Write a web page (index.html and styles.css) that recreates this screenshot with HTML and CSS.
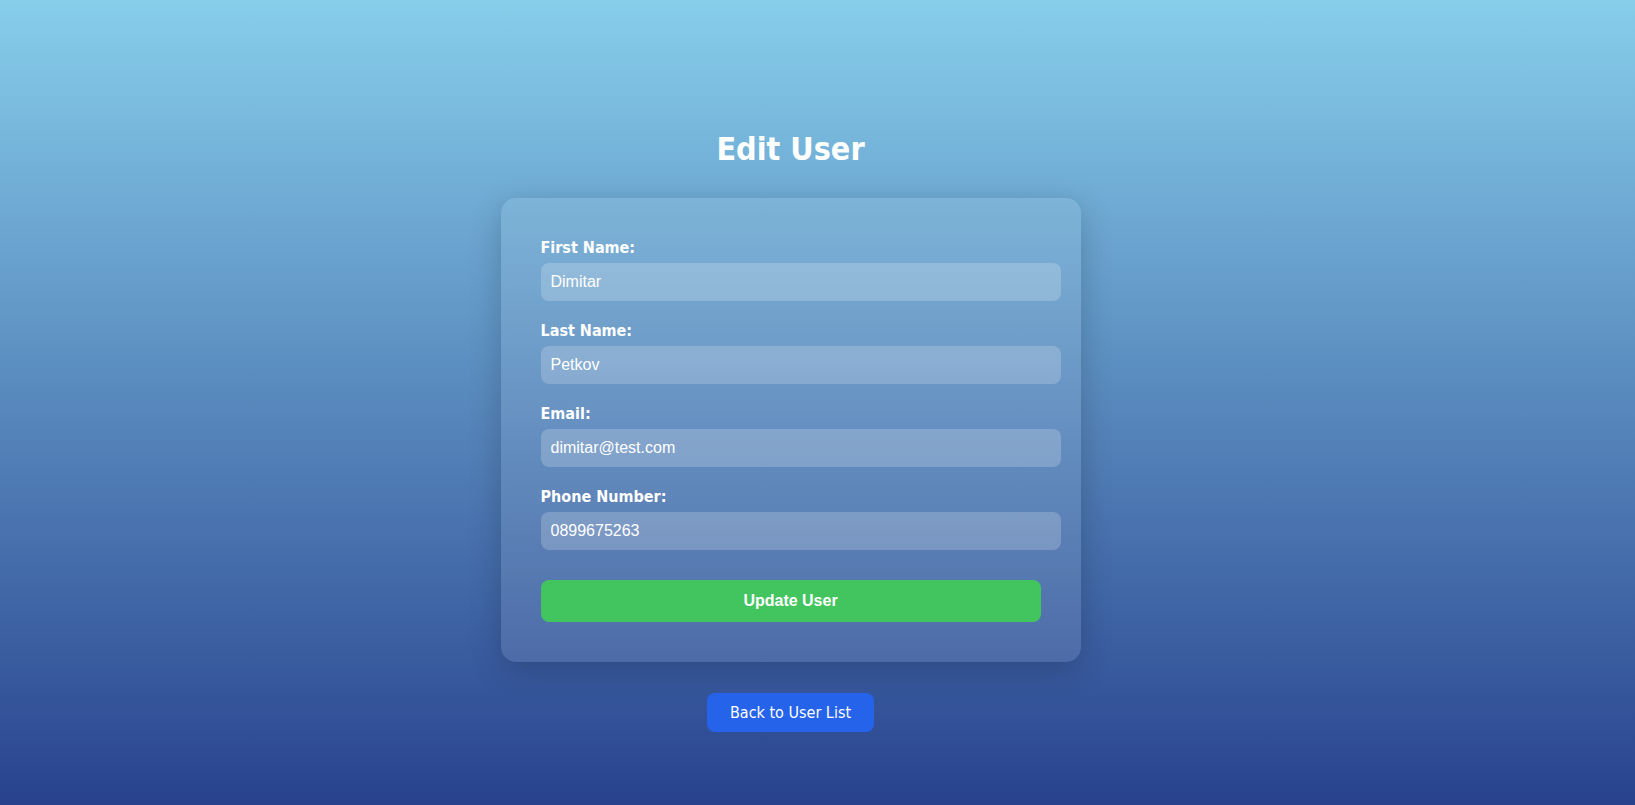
FILE: index.html
```html
<!DOCTYPE html>
<html lang="en">
<head>
<meta charset="UTF-8">
<title>Edit User</title>
<link rel="stylesheet" href="styles.css">
</head>
<body>
<main class="page">
  <h1 class="title">Edit User</h1>
  <form class="card">
    <label class="label" for="firstName">First Name:</label>
    <input class="input" id="firstName" type="text" value="Dimitar">
    <label class="label" for="lastName">Last Name:</label>
    <input class="input" id="lastName" type="text" value="Petkov">
    <label class="label" for="email">Email:</label>
    <input class="input" id="email" type="email" value="dimitar@test.com">
    <label class="label" for="phone">Phone Number:</label>
    <input class="input" id="phone" type="text" value="0899675263">
    <button class="submit" type="button">Update User</button>
  </form>
  <a class="back" href="#">Back to User List</a>
</main>
</body>
</html>
```
FILE: styles.css
```css
html, body {
  margin: 0;
  padding: 0;
}
body {
  min-height: 100vh;
  background: linear-gradient(to bottom, #87ceeb 0%, #28428e 100%);
  font-family: "DejaVu Sans Condensed", "DejaVu Sans", sans-serif;
  color: #fff;
}
.page {
  display: flex;
  flex-direction: column;
  align-items: center;
  padding-top: 131px;
  padding-right: 54px;
}
.title {
  margin: 0 0 30px;
  font-size: 32px;
  font-weight: bold;
  line-height: 37px;
  color: #fff;
}
.card {
  width: 500px;
  padding: 40px;
  background: rgba(255, 255, 255, 0.1);
  border-radius: 15px;
  box-shadow: 0 8px 32px rgba(0, 0, 0, 0.2);
  display: flex;
  flex-direction: column;
  align-items: flex-start;
}
.label {
  display: block;
  font-size: 16px;
  font-weight: bold;
  line-height: 20px;
  margin-bottom: 5px;
}
.input {
  width: 100%;
  padding: 10px;
  margin: 0 0 20px;
  border: none;
  border-radius: 8px;
  background: rgba(255, 255, 255, 0.2);
  color: #fff;
  font-family: "Liberation Sans", Arial, sans-serif;
  font-size: 16px;
  line-height: 18px;
  outline: none;
}
.submit {
  width: 100%;
  margin-top: 10px;
  padding: 12px;
  border: none;
  border-radius: 8px;
  background: #42c45f;
  color: #fff;
  font-family: "Liberation Sans", Arial, sans-serif;
  font-size: 16px;
  font-weight: bold;
  line-height: 18px;
  cursor: pointer;
}
.back {
  margin-top: 31px;
  padding: 10px 23px;
  background: #2563eb;
  border-radius: 8px;
  color: #fff;
  text-decoration: none;
  font-size: 16px;
  line-height: 19px;
}
```
